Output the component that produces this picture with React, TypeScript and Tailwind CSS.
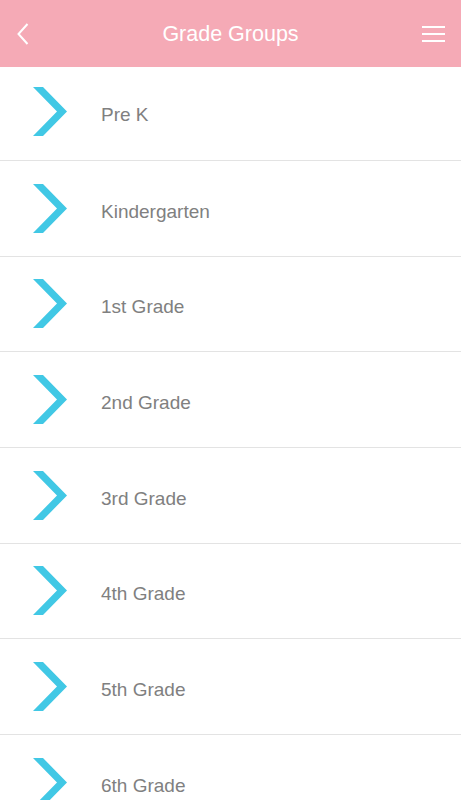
const grades = [
  "Pre K",
  "Kindergarten",
  "1st Grade",
  "2nd Grade",
  "3rd Grade",
  "4th Grade",
  "5th Grade",
  "6th Grade",
];

function Chevron() {
  return (
    <svg width="34" height="49" viewBox="0 0 34 49" className="shrink-0">
      <polygon points="0,0 10,0 34,24.5 10,49 0,49 24,24.5" fill="#41c8e5" />
    </svg>
  );
}

export default function App() {
  return (
    <div className="w-[461px] h-[800px] overflow-hidden bg-white font-['Liberation_Sans',Arial,sans-serif]">
      <header className="h-[67px] bg-[#f5aab6] grid grid-cols-[1fr_auto_1fr] items-center px-[17px]">
        <svg width="12" height="22" viewBox="0 0 12 22">
          <polyline points="10.5,1 1.5,11 10.5,21" fill="none" stroke="#fff" strokeWidth="2" />
        </svg>
        <h1 className="text-white text-[21.5px] leading-none mt-[2px]">Grade Groups</h1>
        <div className="w-[23px] justify-self-end flex flex-col gap-[5.5px] mr-[-1px] mt-[1px]">
          <span className="block h-[1.5px] bg-white" />
          <span className="block h-[1.5px] bg-white" />
          <span className="block h-[1.5px] bg-white" />
        </div>
      </header>
      <ul>
        {grades.map((g, i) => (
          <li
            key={g}
            className={
              i === 0
                ? "h-[94px] border-b border-[#e3e3e3] flex items-center pl-[33px] pb-[4px]"
                : "h-[95.67px] border-b border-[#e3e3e3] flex items-center pl-[33px]"
            }
          >
            <Chevron />
            <span className="ml-[34px] mt-[6px] text-[19px] text-[#808080] leading-none">{g}</span>
          </li>
        ))}
      </ul>
    </div>
  );
}
